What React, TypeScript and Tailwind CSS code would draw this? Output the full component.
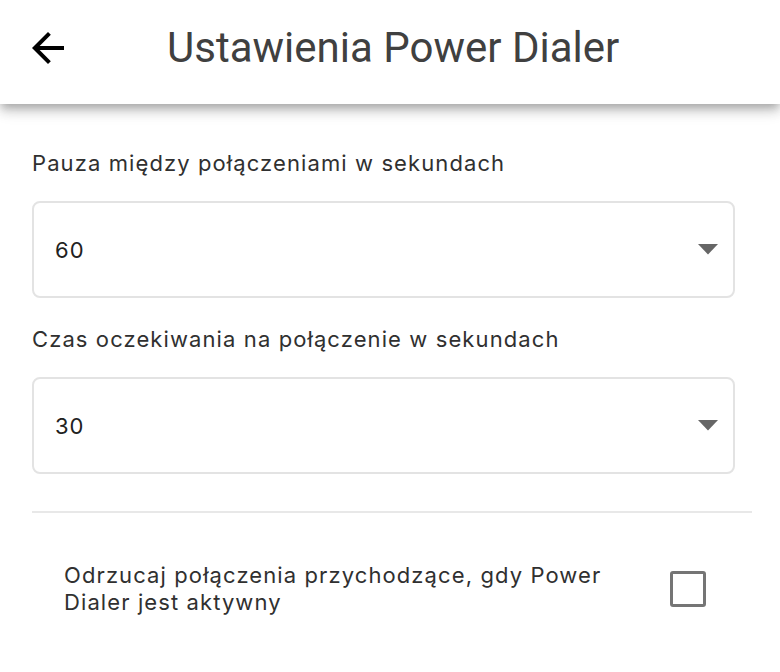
import React from "react";

function Select({ value }: { value: string }) {
  return (
    <div className="flex h-[97px] items-center justify-between rounded-[8px] border-2 border-[#e3e3e3] pl-[21px] pr-[14px]">
      <span className="text-[22px] leading-[26px] tracking-[1px] text-[#212121]">{value}</span>
      <svg width="20" height="11" viewBox="0 0 20 11" className="mr-[1px]">
        <path d="M0 0H20L10 10.5Z" fill="#666666" />
      </svg>
    </div>
  );
}

export default function App() {
  return (
    <div
      className="min-h-[672px] w-[780px] bg-white"
      style={{ fontFamily: "Inter, 'Noto Sans', sans-serif" }}
    >
      <header className="relative z-10 h-[104px] bg-white shadow-[0_4px_8px_-2px_rgba(0,0,0,0.2),0_8px_10px_0_rgba(0,0,0,0.14),0_2px_20px_0_rgba(0,0,0,0.12)]">
        <div className="flex h-[96px] items-center">
          <svg width="48" height="48" viewBox="0 0 24 24" className="ml-[24px] shrink-0">
            <path
              d="M20 11H7.83l5.59-5.59L12 4l-8 8 8 8 1.41-1.41L7.83 13H20v-2z"
              fill="#000000"
            />
          </svg>
          <h1
            className="ml-[95px] text-[42px] leading-[48px] font-normal text-[#404040]"
            style={{ fontFamily: "Roboto, sans-serif" }}
          >
            Ustawienia Power Dialer
          </h1>
        </div>
      </header>
      <main className="flex flex-col px-[32px] pt-[46px]">
        <div className="text-[22px] leading-[26px] tracking-[1.1px] text-[#303030]">
          Pauza między połączeniami w sekundach
        </div>
        <div className="mt-[25px] mr-[13px]">
          <Select value="60" />
        </div>
        <div className="mt-[28px] text-[22px] leading-[26px] tracking-[1.1px] text-[#303030]">
          Czas oczekiwania na połączenie w sekundach
        </div>
        <div className="mt-[25px] mr-[13px]">
          <Select value="30" />
        </div>
        <div className="mt-[37px] h-[2px] w-[720px] bg-[#e8e8e8]" />
        <div className="mt-[49px] flex items-center pl-[32px]">
          <div className="w-[560px] text-[22px] leading-[27px] tracking-[1.1px] text-[#303030]">
            Odrzucaj połączenia przychodzące, gdy Power Dialer jest aktywny
          </div>
          <div className="ml-[46px] h-[36px] w-[36px] rounded-[3px] border-[3px] border-[#757575]" />
        </div>
      </main>
    </div>
  );
}
